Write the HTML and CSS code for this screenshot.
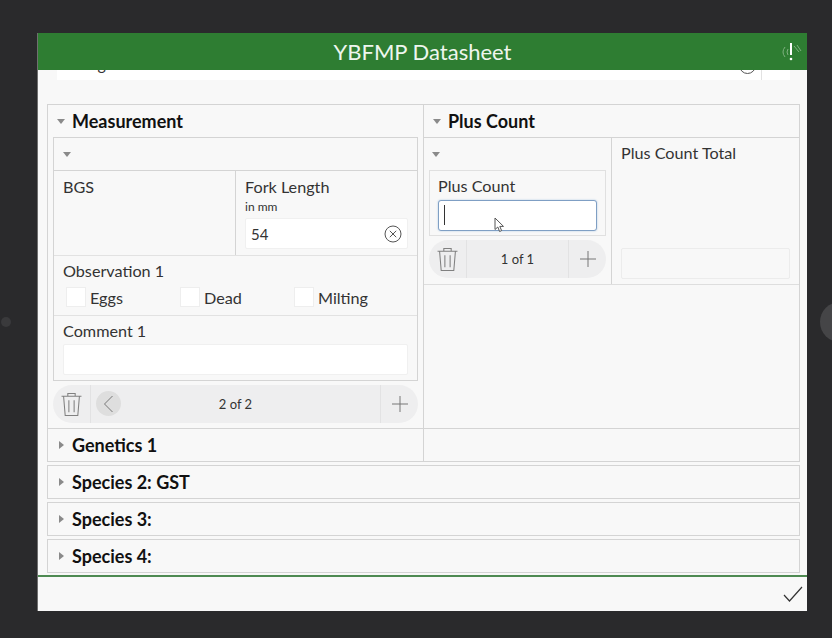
FILE: index.html
```html
<!DOCTYPE html>
<html lang="en">
<head>
  <meta charset="UTF-8" />
  <meta name="viewport" content="width=device-width, initial-scale=1" />
  <title>YBFMP Datasheet</title>
  <link rel="stylesheet" href="styles.css">
</head>
<body>

<span class="side-dot"></span>
<span class="side-circle"></span>

<div class="window">
  <header>
    YBFMP Datasheet
    <svg class="gps-icon" width="24" height="24" viewBox="0 0 24 24" fill="none">
      <path d="M6 7 Q2 12 6 17 M9 9 Q7 12 9 15" stroke="#7fb07f" stroke-width="1"/>
      <path d="M15 6 L20 12 M18 5 L22 11" stroke="#7fb07f" stroke-width="1"/>
      <path d="M12 3 V15" stroke="#fff" stroke-width="2"/>
      <circle cx="12" cy="19" r="1.3" fill="#fff"/>
    </svg>
  </header>

  <div class="form">
    <div class="top-field">
      <span class="top-text">Straight</span>
      <span class="top-clear"></span>
      <span class="top-end"></span>
    </div>

    <div class="columns">
      <section class="col col-left">
        <h3 class="sec-title"><span class="tri-down"></span>Measurement</h3>
        <div class="group">
          <div class="group-head"><span class="tri-down"></span></div>
          <div class="pair">
            <div class="cell">
              <label>BGS</label>
            </div>
            <div class="cell cell-right">
              <label>Fork Length</label>
              <small>in mm</small>
              <div class="input input-value">
                54
                <svg width="18" height="18" viewBox="0 0 18 18" fill="none" stroke="#555" stroke-width="1">
                  <circle cx="9" cy="9" r="8"/>
                  <path d="M5.8 5.8 L12.2 12.2 M12.2 5.8 L5.8 12.2"/>
                </svg>
              </div>
            </div>
          </div>
          <div class="obs">
            <label>Observation 1</label>
            <div class="checks">
              <span class="check"><i></i>Eggs</span>
              <span class="check"><i></i>Dead</span>
              <span class="check"><i></i>Milting</span>
            </div>
          </div>
          <div class="comment">
            <label>Comment 1</label>
            <div class="input"></div>
          </div>
        </div>
        <div class="pager">
          <span class="pager-trash">
            <svg width="21" height="25" viewBox="0 0 20 26" fill="none" stroke="#808080" stroke-width="1" preserveAspectRatio="none">
              <path d="M0.5 4.5 H19.5 M6.5 4 V1.5 H13.5 V4 M2.5 5 L4 24.5 H16 L17.5 5 M7.5 8.5 V21 M12.5 8.5 V21"/>
            </svg>
          </span>
          <span class="pager-prev">
            <svg width="11" height="18" viewBox="0 0 11 18" fill="none" stroke="#777" stroke-width="1">
              <path d="M9.5 1 L1.5 9 L9.5 17"/>
            </svg>
          </span>
          <span class="pager-text">2 of 2</span>
          <span class="pager-add">
            <svg width="16" height="16" viewBox="0 0 16 16" stroke="#777" stroke-width="1">
              <path d="M8 0 V16 M0 8 H16"/>
            </svg>
          </span>
        </div>
      </section>

      <section class="col col-right">
        <h3 class="sec-title"><span class="tri-down"></span>Plus Count</h3>
        <div class="plus-row">
          <div class="plus-main">
            <div class="group-head plus-head"><span class="tri-down"></span></div>
            <div class="plus-box">
              <label>Plus Count</label>
              <div class="input input-focus"><span class="caret"></span></div>
              <svg class="cursor" width="11" height="16" viewBox="0 0 11 16">
                <path d="M1 1 V12.5 L3.8 10 L5.6 14.5 L7.6 13.6 L5.8 9.4 H9.5 Z" fill="#fff" stroke="#555" stroke-width="1"/>
              </svg>
            </div>
            <div class="pager">
              <span class="pager-trash">
                <svg width="21" height="25" viewBox="0 0 20 26" fill="none" stroke="#808080" stroke-width="1" preserveAspectRatio="none">
                  <path d="M0.5 4.5 H19.5 M6.5 4 V1.5 H13.5 V4 M2.5 5 L4 24.5 H16 L17.5 5 M7.5 8.5 V21 M12.5 8.5 V21"/>
                </svg>
              </span>
              <span class="pager-text">1 of 1</span>
              <span class="pager-add">
                <svg width="16" height="16" viewBox="0 0 16 16" stroke="#777" stroke-width="1">
                  <path d="M8 0 V16 M0 8 H16"/>
                </svg>
              </span>
            </div>
          </div>
          <div class="plus-total">
            <label>Plus Count Total</label>
            <div class="input input-off"></div>
          </div>
        </div>
      </section>
    </div>

    <div class="columns genetics">
      <h3 class="sec-title col-left"><span class="tri-right"></span>Genetics 1</h3>
      <div class="col-right"></div>
    </div>
    <h3 class="sec-title species"><span class="tri-right"></span>Species 2: GST</h3>
    <h3 class="sec-title species"><span class="tri-right"></span>Species 3:</h3>
    <h3 class="sec-title species"><span class="tri-right"></span>Species 4:</h3>
  </div>

  <footer>
    <svg width="20" height="16" viewBox="0 0 20 16" fill="none" stroke="#333" stroke-width="1.2">
      <path d="M1 9 L6.5 15 L19 1"/>
    </svg>
  </footer>
</div>

</body>
</html>
```

FILE: styles.css
```css
body {
  margin: 0;
  height: 638px;
  overflow: hidden;
  font-family: 'Lato', sans-serif;
  background-color: #2a2a2c;
  color: #333;
}
.side-dot {
  position: absolute;
  left: 1px;
  top: 317px;
  width: 10px;
  height: 10px;
  border-radius: 50%;
  background: #3a3a3c;
}
.side-circle {
  position: absolute;
  left: 820px;
  top: 302px;
  width: 40px;
  height: 40px;
  border-radius: 50%;
  background: #454547;
}
.window {
  margin: 33px 0 0 38px;
  width: 769px;
  height: 578px;
  background: #f8f8f8;
  box-shadow: -1px 0 0 #6f6f6f;
  display: flex;
  flex-direction: column;
}
header {
  height: 37px;
  flex: none;
  background: #2e7d32;
  color: #eef6ee;
  font-size: 22px;
  line-height: 38px;
  text-align: center;
  display: flex;
  justify-content: center;
  position: relative;
}
.gps-icon {
  position: absolute;
  right: 4px;
  top: 7px;
}
.form {
  flex: 1;
  min-height: 0;
  overflow: hidden;
  padding: 0 7px 0 9px;
}
footer {
  height: 34px;
  flex: none;
  border-top: 2px solid #4e8a52;
  display: flex;
  justify-content: flex-end;
  align-items: center;
  padding-right: 4px;
}
label {
  display: block;
  font-size: 16.2px;
  line-height: 20px;
}
small {
  display: block;
  font-size: 12px;
  line-height: 14px;
  margin-top: 3px;
}

/* clipped field at the top of the scrolled form */
.top-field {
  height: 10px;
  margin: 0 10px 24px 10px;
  background: white;
  overflow: hidden;
  display: flex;
  position: relative;
}
.top-text {
  font-size: 16px;
  line-height: 20px;
  margin: -16px 0 0 9px;
  flex: 1;
}
.top-clear {
  width: 15px;
  height: 15px;
  border: 1px solid #555;
  border-radius: 50%;
  margin: -13px 5px 0 0;
}
.top-end {
  width: 28px;
  border-left: 1px solid #e2e2e2;
}

.columns {
  display: flex;
  border: 1px solid #d4d4d4;
  border-bottom: none;
  height: 324px;
  width: 753px;
  box-sizing: border-box;
}
.col-left {
  width: 375px;
  flex: none;
  box-sizing: border-box;
}
.col-right {
  flex: 1;
  border-left: 1px solid #d4d4d4;
}
.col-left.col, .col-right.col {
  display: flex;
  flex-direction: column;
}
.sec-title {
  margin: 0;
  height: 32px;
  font-size: 18px;
  font-weight: 700;
  line-height: 33px;
  color: #111;
  padding-left: 9px;
  display: flex;
  align-items: center;
  gap: 6px;
}
.tri-down {
  width: 0;
  height: 0;
  margin-right: 1px;
  border-left: 4.5px solid transparent;
  border-right: 4.5px solid transparent;
  border-top: 5px solid #8a8a8a;
}
.tri-right {
  width: 0;
  height: 0;
  margin: 0 2px 0 2px;
  border-top: 4.5px solid transparent;
  border-bottom: 4.5px solid transparent;
  border-left: 5px solid #8a8a8a;
}
.group {
  margin: 0 5px 0 5px;
  border: 1px solid #d4d4d4;
  height: 244px;
  box-sizing: border-box;
}
.group-head {
  height: 32px;
  padding-left: 9px;
  display: flex;
  align-items: center;
}
.pair {
  display: flex;
  height: 85px;
  box-sizing: border-box;
  border-top: 1px solid #d4d4d4;
}
.cell {
  width: 181px;
  padding: 6px 9px;
  box-sizing: border-box;
}
.cell-right {
  flex: 1;
  border-left: 1px solid #d4d4d4;
}
.input {
  height: 31px;
  background: white;
  box-sizing: border-box;
  border: 1px solid #f0f0f0;
  border-radius: 2px;
}
.input-value {
  margin-top: 4px;
  display: flex;
  justify-content: space-between;
  align-items: center;
  padding: 0 5px 0 5px;
  font-size: 15px;
}
.obs {
  height: 60px;
  border-top: 1px solid #e2e2e2;
  box-sizing: border-box;
  padding: 5px 9px;
}
.checks {
  display: flex;
  margin: 6px 0 0 3px;
}
.check {
  width: 115px;
  height: 20px;
  display: flex;
  align-items: center;
  gap: 4px;
  font-size: 16.2px;
}
.check i {
  width: 20px;
  height: 20px;
  box-sizing: border-box;
  background: white;
  border: 1px solid #eeeeee;
}
.comment {
  border-top: 1px solid #e2e2e2;
  padding: 5px 9px;
}
.comment .input {
  margin-top: 3px;
}

.pager {
  display: flex;
  align-items: center;
  height: 38px;
  margin: 4px 5px 0 5px;
  background: #eeeeef;
  border-radius: 19px;
  position: relative;
}
.pager-trash {
  width: 38px;
  height: 100%;
  flex: none;
  display: flex;
  justify-content: center;
  align-items: center;
  border-right: 1px solid #e2e2e3;
  box-sizing: border-box;
}
.pager-prev {
  position: absolute;
  left: 43px;
  top: 6px;
  width: 25px;
  height: 25px;
  background: #dedede;
  border-radius: 50%;
  display: flex;
  justify-content: center;
  align-items: center;
}
.pager-text {
  flex: 1;
  text-align: center;
  font-size: 13px;
}
.pager-add {
  width: 38px;
  height: 100%;
  flex: none;
  display: flex;
  justify-content: center;
  align-items: center;
  border-left: 1px solid #e2e2e3;
  box-sizing: border-box;
}

.plus-row {
  display: flex;
  height: 148px;
  border-top: 1px solid #d4d4d4;
  border-bottom: 1px solid #dedede;
  box-sizing: border-box;
}
.plus-main {
  width: 188px;
  flex: none;
  box-sizing: border-box;
  border-right: 1px solid #d4d4d4;
}
.plus-head {
  padding-left: 8px;
}
.plus-box {
  margin: 0 5px;
  height: 66px;
  border: 1px solid #e0e0e0;
  box-sizing: border-box;
  padding: 5px 8px;
  position: relative;
}
.input-focus {
  margin-top: 4px;
  border: 1px solid #7f9fc4;
  border-radius: 3px;
  box-shadow: 0 0 2px #a9c4e0;
  padding: 4px 5px;
}
.caret {
  display: block;
  width: 1px;
  height: 20px;
  background: #333;
}
.cursor {
  position: absolute;
  left: 64px;
  top: 46px;
}
.plus-total {
  flex: 1;
  padding: 5px 9px;
  display: flex;
  flex-direction: column;
  justify-content: space-between;
}
.input-off {
  background: #f8f8f8;
  border: 1px solid #ececec;
}

.genetics {
  height: 34px;
  border-bottom: 1px solid #d4d4d4;
  border-top: 1px solid #d4d4d4;
}
.species {
  width: 753px;
  box-sizing: border-box;
  height: 34px;
  margin-top: 3px;
  border: 1px solid #d4d4d4;
}
```
